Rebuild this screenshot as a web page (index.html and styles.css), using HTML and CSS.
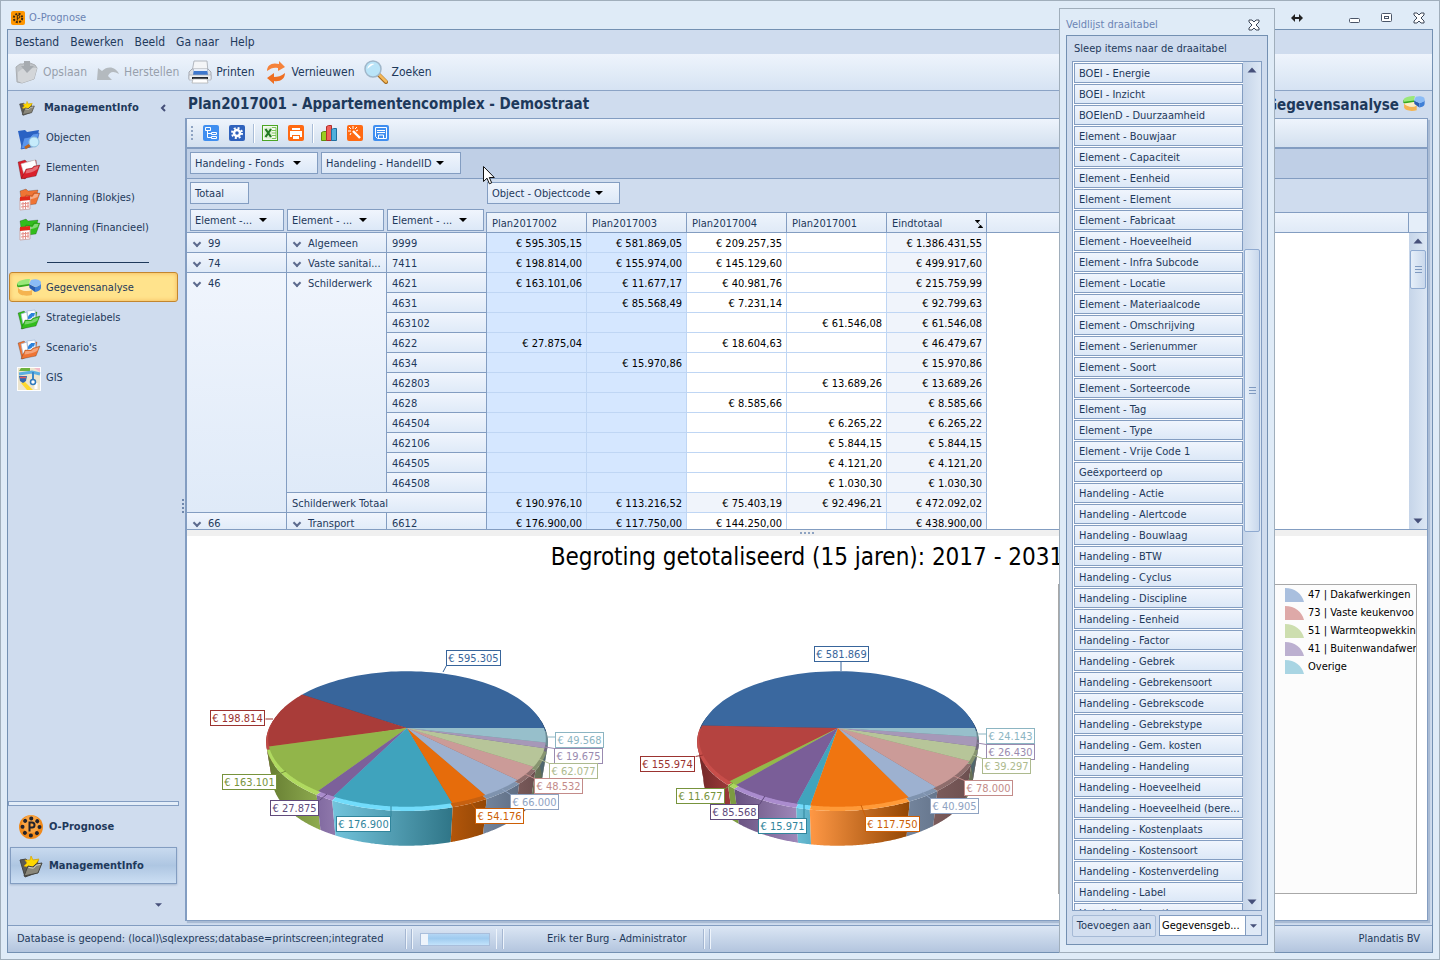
FILE: index.html
```
<!DOCTYPE html>
<html lang="nl">
<head>
    <meta charset="UTF-8">
    <meta name="viewport" content="width=device-width, initial-scale=1.0">
    <title>O-Prognose</title>
    <link rel="stylesheet" href="styles.css">
</head>
<body>
<!-- gedeelde iconen -->
<svg class="sprite" aria-hidden="true">
    <symbol id="i-folder" viewBox="0 0 24 24">
        <path d="M1 5l7-2 2 2 9-2 1 8-12 11-4-1z" fill="currentColor" stroke="#00000033"/>
        <path d="M4 7l14-4 2 8-13 6z" fill="#fff" stroke="#ccc" stroke-width=".6"/>
        <path d="M4 22l5-10 6-1 2-2 6-1-4 11z" fill="currentColor" stroke="#00000044" stroke-width=".8"/>
        <path d="M9.500 12.700l6-1 2-2 4-.7-1 3c-4 3-8 4-12 4.500z" fill="#fff" opacity=".35"/>
    </symbol>
    <symbol id="i-infofolder" viewBox="0 0 24 24">
        <path d="M1 6l6-1 2 2 10-1-2 13-11 4z" fill="#5c5a52" stroke="#444"/>
        <path d="M12 2l2 4 6-1-3 5-5 4-7-2 3-3-2-3 5 0z" fill="#ffd800" stroke="#d8a400" stroke-width=".7"/>
        <path d="M5 22l4-10 5 1 3-3 6-1-4 10z" fill="#8a877a" stroke="#44443f"/>
        <path d="M9.500 13.500l5 .7 3-3 4-.8" stroke="#d8d6c8" fill="none"/>
    </symbol>
    <symbol id="i-calfolder" viewBox="0 0 24 24">
        <path d="M3 4l6-2 2 2 10-1-3 13-13 3z" fill="currentColor" stroke="#00000033"/>
        <path d="M4 19L9 8l6 1 2-3 6 0-4 11z" fill="currentColor" stroke="#00000044" stroke-width=".7"/>
        <path d="M9.500 9l6 1 2-3 4 0-1 3c-4 2-8 2-12 3z" fill="#fff" opacity=".4"/>
        <path d="M3 11l10-1v12L3 23z" fill="#fff" stroke="#caa"/>
        <path d="M3 10l10-1v4L3 14z" fill="#e02a1a"/>
        <path d="M4 17l8-1M4 20l8-1M6 15v7M8.500 15v7M11 15v6" stroke="#e38d85"/>
    </symbol>
    <symbol id="i-docfolder" viewBox="0 0 24 24">
        <path d="M1 6l6-2 2 2 11-1-2 12-13 5z" fill="currentColor" stroke="#00000033"/>
        <path d="M4 7l6-2 1 10-5 2zM10 4l8-1 1 9-8 3z" fill="#fff" stroke="#9fb6d4" stroke-width=".7"/>
        <path d="M11 10c1-3 3-3 3-4l4 0-1 4-1-1c-1 2-2 3-5 3z" fill="#2b83dc"/>
        <path d="M4 22l4-9 6 0 2-2 7-2-4 10z" fill="currentColor" stroke="#00000044" stroke-width=".8"/>
        <path d="M8.500 14l6 0 2-2 5-1.500-1 3c-4 3-8 3-13 4z" fill="#fff" opacity=".35"/>
    </symbol>
    <symbol id="i-pie" viewBox="0 0 24 20">
        <path d="M0 5.500h12.500V10L1 9.500 0 8z" fill="#35a81d"/>
        <path d="M0 5.500C1 2.500 7 1 13 1l-1 5-11 1.500z" fill="#9ae87a"/>
        <path d="M1 9.500C4 13 10 14 15 12v5C9 18.500 2 17.500 1 14z" fill="#f5b450"/>
        <path d="M1 9.500L13 7.500l2 4.500C10 14 3 13 1 9.500z" fill="#fdeec5"/>
        <path d="M12 6l6 3v5l-5.500-4z" fill="#2a5db0"/>
        <path d="M18 9c4-1 6-2.500 6-4v4.500c0 2.500-3 4-6 4.500z" fill="#3f7fd6"/>
        <path d="M12 6l2-4c4-1.500 10-.5 10 3 0 2-3 3.500-6 4z" fill="#8bbcf6"/>
    </symbol>
    <symbol id="i-up" viewBox="0 0 10 6"><path d="M5 .5L9.500 5.500h-9z" fill="#46507a"/></symbol>
    <symbol id="i-down" viewBox="0 0 10 6"><path d="M5 5.500L9.500 .5h-9z" fill="#46507a"/></symbol>
    <symbol id="i-drop" viewBox="0 0 8 4"><path d="M0 0h8L4 4z"/></symbol>
    <symbol id="i-close" viewBox="0 0 12 12">
        <path d="M1 1h3l2 2 2-2h3v2L8 6l3 3v2H8L6 9l-2 2H1V9l3-3-3-3z" fill="#fff" stroke="#3c4657"/>
    </symbol>
    <symbol id="i-wedge" viewBox="0 0 19 14"><path d="M0 0c10 0 17 6 19 14H0z" fill="currentColor"/></symbol>
</svg>

<div class="app">
    <header class="titlebar">
        <svg class="logo" viewBox="0 0 14 14"><rect width="14" height="14" rx="2" fill="#ff9600"/><circle cx="7" cy="7" r="4.200" fill="none" stroke="#3d2a10" stroke-width="2" stroke-dasharray="2 1.300"/><path d="M6.300 9.500v-5h1.200a1.300 1.300 0 0 1 0 2.700H6.300" fill="none" stroke="#3d2a10"/></svg>
        <h1>O-Prognose</h1>
        <svg class="resize" viewBox="0 0 12 8"><path d="M0 4l4-4v3h4V0l4 4-4 4V5H4v3z" fill="#222"/></svg>
        <button class="win" aria-label="Minimaliseren"><svg width="12" height="12" viewBox="0 0 12 12"><rect x=".5" y="6.500" width="10" height="4" rx="1" fill="#fff" stroke="#4a5568"/></svg></button>
        <button class="win" aria-label="Maximaliseren"><svg width="12" height="12" viewBox="0 0 12 12"><rect x=".5" y="1.500" width="10" height="8" rx="1" fill="#fff" stroke="#4a5568"/><rect x="3.500" y="4.500" width="4" height="2" fill="#fff" stroke="#4a5568"/></svg></button>
        <button class="win" aria-label="Sluiten"><svg width="12" height="12"><use href="#i-close"/></svg></button>
    </header>

    <div class="frame">
        <nav class="menu">
            <a href="#">Bestand</a><a href="#">Bewerken</a><a href="#">Beeld</a><a href="#">Ga naar</a><a href="#">Help</a>
        </nav>
        <div class="tools">
            <button disabled>
                <svg viewBox="0 0 24 24"><path d="M1 7l4-3 3 0 2-1 5 0 5 2 2 3-3 11-12 4-5-1z" fill="#bfc3c7" stroke="#abafb3"/><path d="M3 12l4-3 12-1 3 0-3 11-12 4-4-2z" fill="#d3d6d9"/><path d="M9 1h6v5h4l-7 7-6-7h3z" fill="#a6abb0"/></svg>Opslaan
            </button>
            <button disabled>
                <svg viewBox="0 0 24 24"><path d="M1 20L2 8l4 3c6-6 14-4 17 3-5-3-9-3-11 2l4 4z" fill="#b4babf"/></svg>Herstellen
            </button>
            <button>
                <svg viewBox="0 0 24 24"><path d="M6 1h13l1 11H4z" fill="#f4f5f7" stroke="#b2b7bf"/><path d="M1 12l3-3h16l3 3v7H1z" fill="#dcdfe4" stroke="#a5a9b1"/><path d="M6 9h13l1 6H5z" fill="#3f78cd"/><path d="M6 9h13l0 2H6z" fill="#e9eef7"/><path d="M1 15h22v5H1z" fill="#eceef1" stroke="#a9adb5" stroke-width=".7"/><path d="M4 18h16" stroke="#23272e" stroke-width="2"/><path d="M5 19h14l1 4H4z" fill="#fff" stroke="#aaa" stroke-width=".7"/></svg>Printen
            </button>
            <button>
                <svg viewBox="0 0 24 24"><path d="M3 11c0-6 5-9 12-7V1l6 6-7 4V8c-4-1-7 0-11 3z" fill="#f5823a"/><path d="M21 13c0 6-5 9-11 8v3l-7-6 7-5v4c4 0 7-1 11-4z" fill="#ee6f22"/></svg>Vernieuwen
            </button>
            <button>
                <svg viewBox="0 0 24 24"><path d="M14 14l8 8" stroke="#a36a1d" stroke-width="4" stroke-linecap="round"/><path d="M14.500 14l7.500 7.500" stroke="#f5b95b" stroke-width="2.500" stroke-linecap="round"/><circle cx="9" cy="9" r="8" fill="#b9e4f8" stroke="#9fb6c9" stroke-width="1.500"/><path d="M3.500 9c0-4 4-6 7-5-3 1-5 3-7 5z" fill="#fff"/></svg>Zoeken
            </button>
        </div>

        <div class="body">
            <aside class="side">
                <h2><svg viewBox="0 0 24 24"><use href="#i-infofolder"/></svg>ManagementInfo
                    <button class="collapse" aria-label="Inklappen"><svg width="6" height="8" viewBox="0 0 6 8"><path d="M5 1L2 4l3 3" fill="none" stroke="#46507a" stroke-width="2"/></svg></button>
                </h2>
                <nav class="nav">
                    <a href="#"><svg class="blue" viewBox="0 0 24 24"><path d="M1 4l7-1 2 2 12-2-4 16-13 3z" fill="#2a62c4"/><path d="M4 22l3-11 6-1 3-3 6-1-3 13z" fill="#5b95ec" stroke="#2a5cb8" stroke-width=".7"/><path d="M13 18l-5 3" stroke="#c0651c" stroke-width="3"/><circle cx="17" cy="15" r="5" fill="#c6ebfb" stroke="#8fc0de"/></svg>Objecten</a>
                    <a href="#"><svg class="red" viewBox="0 0 24 24"><use href="#i-folder"/></svg>Elementen</a>
                    <a href="#"><svg class="orange" viewBox="0 0 24 24"><use href="#i-calfolder"/></svg>Planning (Blokjes)</a>
                    <a href="#"><svg class="green" viewBox="0 0 24 24"><use href="#i-calfolder"/></svg>Planning (Financieel)</a>
                    <hr>
                    <a href="#" class="on"><svg viewBox="0 0 24 20"><use href="#i-pie"/></svg>Gegevensanalyse</a>
                    <a href="#"><svg class="green" viewBox="0 0 24 24"><use href="#i-docfolder"/></svg>Strategielabels</a>
                    <a href="#"><svg class="orange" viewBox="0 0 24 24"><use href="#i-docfolder"/></svg>Scenario's</a>
                    <a href="#"><svg viewBox="0 0 24 24"><rect width="24" height="24" fill="#fff"/><rect x="1" y="1" width="22" height="22" fill="#ece5cf"/><path d="M4 1h9v3H2z" fill="#6cb33f"/><path d="M17 1h6v4z" fill="#f3bccb"/><path d="M2 7l13-2 8 2" stroke="#5aaee2" stroke-width="3" fill="none"/><path d="M7 14l9 9h-6l-6-7z" fill="#ffd92e"/><path d="M19 16v6" stroke="#fff" stroke-width="3"/><path d="M16 5v9" stroke="#3a87c8" stroke-width="2"/><circle cx="16" cy="15" r="2.500" fill="#fff" stroke="#2f79bd" stroke-width="1.500"/><path d="M2 9h8l-1 5-3 2-3-2z" fill="#3266b0"/><path d="M3 10.500h6" stroke="#e25b5b" stroke-width="1.500"/></svg>GIS</a>
                </nav>
                <div class="bar"></div>
                <nav class="groups">
                    <a href="#"><svg viewBox="0 0 24 24"><circle cx="12" cy="12" r="12" fill="#f08a1c"/><circle cx="12" cy="9" r="9" fill="#ffb65c" opacity=".6"/><circle cx="12" cy="12" r="8.500" fill="none" stroke="#23232b" stroke-width="4" stroke-linecap="round" stroke-dasharray=".1 6.570"/><path d="M10.500 16.500v-9h2.500a2.500 2.500 0 0 1 0 5h-2.500" fill="none" stroke="#23232b" stroke-width="2"/></svg>O-Prognose</a>
                    <a href="#" class="on"><svg viewBox="0 0 24 24"><use href="#i-infofolder"/></svg>ManagementInfo</a>
                </nav>
                <button class="more" aria-label="Meer"><svg width="7" height="4"><use href="#i-drop"/></svg></button>
            </aside>
            <div class="vsplit"><i></i></div>

            <main class="main">
                <div class="heading">
                    <h2>Plan2017001 - Appartementencomplex - Demostraat</h2>
                    <h2 class="page">Gegevensanalyse<svg viewBox="0 0 24 20"><use href="#i-pie"/></svg></h2>
                </div>
                <div class="panel">
                    <div class="icons">
                        <i class="grip"></i>
                        <button aria-label="Veldlijst"><svg viewBox="0 0 16 16"><rect width="16" height="16" rx="2" fill="#3f8ef0"/><path d="M2.500 2.500h5v3h-5zM8.500 7.500h5v2h-5zM8.500 11.500h5v2h-5zM4.500 6v6.500h4M4.500 8.500h4" fill="none" stroke="#fff"/></svg></button>
                        <button aria-label="Instellingen"><svg viewBox="0 0 16 16"><rect width="16" height="16" rx="2" fill="#2f62bd"/><circle cx="8" cy="8" r="3" fill="none" stroke="#fff" stroke-width="2.500"/><circle cx="8" cy="8" r="5" fill="none" stroke="#fff" stroke-width="2" stroke-dasharray="2 1.930"/></svg></button>
                        <i class="sep"></i>
                        <button aria-label="Exporteren naar Excel"><svg viewBox="0 0 16 16"><rect x=".5" y=".5" width="15" height="15" fill="#f4faf0" stroke="#4ba524"/><path d="M10 2.500h4v11h-4M10 5.500h4M10 8h4M10 10.500h4" stroke="#7cc35b" fill="none"/><path d="M2 3l8-1v12l-8-1z" fill="#d9efcf"/><path d="M3.500 4l5.500 8M9 4l-5.500 8" stroke="#227a22" stroke-width="2.200"/></svg></button>
                        <button aria-label="Afdrukken"><svg viewBox="0 0 16 16"><rect width="16" height="16" rx="2" fill="#ff6a13"/><path d="M4 3h8v2H4zM2 6h12v6h-2v-2H4v2H2zM5 11h6v3H5z" fill="#fff"/></svg></button>
                        <i class="sep"></i>
                        <button aria-label="Grafiek"><svg viewBox="0 0 16 16"><path d="M.5 7.500l2-1h3v9h-5z" fill="#9bcc20" stroke="#5d8f0c"/><path d="M5.500 1.500l2-1h3v15h-5z" fill="#f0605a" stroke="#b32d2a"/><path d="M10.500 4.500l2-1h3v12h-5z" fill="#4fb0dc" stroke="#1f6fa0"/></svg></button>
                        <button aria-label="Wizard"><svg viewBox="0 0 16 16"><rect width="16" height="16" rx="2" fill="#ff6a13"/><path d="M6 6l7 7" stroke="#fff" stroke-width="2.400"/><path d="M6 1v3M2 2l2 2M1 6h3M10 2L8 4M3 10l1-2M11 5L9 6" stroke="#fff"/></svg></button>
                        <button aria-label="Opslaan"><svg viewBox="0 0 16 16"><rect width="16" height="16" rx="2" fill="#3f8ef0"/><path d="M2.500 2.500h11v11h-9l-2-2z" fill="none" stroke="#fff"/><path d="M4 5.500h8M4 7.500h8M5.500 13v-3h5v3" fill="none" stroke="#fff"/></svg></button>
                    </div>
                    <div class="filters">
                        <button class="field">Handeling - Fonds<svg><use href="#i-drop"/></svg></button>
                        <button class="field">Handeling - HandelID<svg><use href="#i-drop"/></svg></button>
                    </div>
                    <div class="pivot">
                        <div class="scroll">
                        <table>
                            <colgroup><col class="c"><col class="c"><col class="c"><col class="c"><col class="c"><col class="c"><col class="c"><col class="c"><col></colgroup>
                            <thead>
                            <tr class="areas">
                                <td colspan="3"><button class="field short">Totaal</button></td>
                                <td colspan="6"><button class="field object">Object - Objectcode<svg><use href="#i-drop"/></svg></button></td>
                            </tr>
                            <tr class="cols">
                                <th><button class="field wide">Element -...<svg><use href="#i-drop"/></svg></button></th>
                                <th><button class="field wide">Element - ...<svg><use href="#i-drop"/></svg></button></th>
                                <th><button class="field wide">Element - ...<svg><use href="#i-drop"/></svg></button></th>
                                <th><div>Plan2017002</div></th>
                                <th><div>Plan2017003</div></th>
                                <th><div>Plan2017004</div></th>
                                <th><div>Plan2017001</div></th>
                                <th><div>Eindtotaal<svg width="8" height="8" viewBox="0 0 8 8"><path d="M0 0h5L2.500 3zM3 8h5L5.500 5zM2 2l4 4" stroke="#000" stroke-width=".5"/></svg></div></th>
                                <th><div></div></th>
                            </tr>
                            </thead>
                            <tbody>
                            <tr><th class="g">99</th><th class="g">Algemeen</th><th>9999</th><td>€ 595.305,15</td><td>€ 581.869,05</td><td>€ 209.257,35</td><td></td><td>€ 1.386.431,55</td></tr>
                            <tr><th class="g">74</th><th class="g">Vaste sanitai...</th><th>7411</th><td>€ 198.814,00</td><td>€ 155.974,00</td><td>€ 145.129,60</td><td></td><td>€ 499.917,60</td></tr>
                            <tr><th class="g" rowspan="12">46</th><th class="g" rowspan="11">Schilderwerk</th><th>4621</th><td>€ 163.101,06</td><td>€ 11.677,17</td><td>€ 40.981,76</td><td></td><td>€ 215.759,99</td></tr>
                            <tr><th>4631</th><td></td><td>€ 85.568,49</td><td>€ 7.231,14</td><td></td><td>€ 92.799,63</td></tr>
                            <tr><th>463102</th><td></td><td></td><td></td><td>€ 61.546,08</td><td>€ 61.546,08</td></tr>
                            <tr><th>4622</th><td>€ 27.875,04</td><td></td><td>€ 18.604,63</td><td></td><td>€ 46.479,67</td></tr>
                            <tr><th>4634</th><td></td><td>€ 15.970,86</td><td></td><td></td><td>€ 15.970,86</td></tr>
                            <tr><th>462803</th><td></td><td></td><td></td><td>€ 13.689,26</td><td>€ 13.689,26</td></tr>
                            <tr><th>4628</th><td></td><td></td><td>€ 8.585,66</td><td></td><td>€ 8.585,66</td></tr>
                            <tr><th>464504</th><td></td><td></td><td></td><td>€ 6.265,22</td><td>€ 6.265,22</td></tr>
                            <tr><th>462106</th><td></td><td></td><td></td><td>€ 5.844,15</td><td>€ 5.844,15</td></tr>
                            <tr><th>464505</th><td></td><td></td><td></td><td>€ 4.121,20</td><td>€ 4.121,20</td></tr>
                            <tr><th>464508</th><td></td><td></td><td></td><td>€ 1.030,30</td><td>€ 1.030,30</td></tr>
                            <tr class="total"><th colspan="2">Schilderwerk Totaal</th><td>€ 190.976,10</td><td>€ 113.216,52</td><td>€ 75.403,19</td><td>€ 92.496,21</td><td>€ 472.092,02</td></tr>
                            <tr><th class="g">66</th><th class="g">Transport</th><th>6612</th><td>€ 176.900,00</td><td>€ 117.750,00</td><td>€ 144.250,00</td><td></td><td>€ 438.900,00</td></tr>
                            </tbody>
                        </table>
                        </div>
                        <div class="edge">
                            <i class="corner"></i>
                            <div class="rail">
                                <svg><use href="#i-up"/></svg><i class="thumb"></i><svg class="end"><use href="#i-down"/></svg>
                            </div>
                        </div>
                    </div>
                    <div class="hsplit"><i></i></div>
                    <section class="chart">
                        <h3>Begroting getotaliseerd (15 jaren): 2017 - 2031</h3>
                        <div class="plot">
                            <svg class="pie" id="pie1" viewBox="0 0 431 230"></svg>
                            <svg class="pie" id="pie2" viewBox="0 0 431 230"></svg>
                            <ul class="legend">
                                <li><svg class="l1"><use href="#i-wedge"/></svg>47 | Dakafwerkingen</li>
                                <li><svg class="l2"><use href="#i-wedge"/></svg>73 | Vaste keukenvoo</li>
                                <li><svg class="l3"><use href="#i-wedge"/></svg>51 | Warmteopwekkin</li>
                                <li><svg class="l4"><use href="#i-wedge"/></svg>41 | Buitenwandafwer</li>
                                <li><svg class="l5"><use href="#i-wedge"/></svg>Overige</li>
                            </ul>
                        </div>
                    </section>
                </div>
            </main>
        </div>

        <footer class="status">
            <span class="db">Database is geopend: (local)\sqlexpress;database=printscreen;integrated</span>
            <i class="div"></i><i class="progress"></i><i class="div"></i>
            <span class="user">Erik ter Burg - Administrator</span><i class="div"></i>
            <span class="vendor">Plandatis BV</span>
        </footer>
    </div>

    <svg class="pointer" viewBox="0 0 12 19"><path d="M.5 .5v15l3.500-3.300 2.400 5.600 2.300-1-2.400-5.300h5z" fill="#fff" stroke="#111"/></svg>

    <section class="fieldlist">
        <header>
            <h2>Veldlijst draaitabel</h2>
            <button class="win" aria-label="Sluiten"><svg width="12" height="12"><use href="#i-close"/></svg></button>
        </header>
        <div class="inner">
            <p>Sleep items naar de draaitabel</p>
            <div class="box">
                <ul>
                    <li>BOEI - Energie</li>
                    <li>BOEI - Inzicht</li>
                    <li>BOEIenD - Duurzaamheid</li>
                    <li>Element - Bouwjaar</li>
                    <li>Element - Capaciteit</li>
                    <li>Element - Eenheid</li>
                    <li>Element - Element</li>
                    <li>Element - Fabricaat</li>
                    <li>Element - Hoeveelheid</li>
                    <li>Element - Infra Subcode</li>
                    <li>Element - Locatie</li>
                    <li>Element - Materiaalcode</li>
                    <li>Element - Omschrijving</li>
                    <li>Element - Serienummer</li>
                    <li>Element - Soort</li>
                    <li>Element - Sorteercode</li>
                    <li>Element - Tag</li>
                    <li>Element - Type</li>
                    <li>Element - Vrije Code 1</li>
                    <li>Geëxporteerd op</li>
                    <li>Handeling - Actie</li>
                    <li>Handeling - Alertcode</li>
                    <li>Handeling - Bouwlaag</li>
                    <li>Handeling - BTW</li>
                    <li>Handeling - Cyclus</li>
                    <li>Handeling - Discipline</li>
                    <li>Handeling - Eenheid</li>
                    <li>Handeling - Factor</li>
                    <li>Handeling - Gebrek</li>
                    <li>Handeling - Gebrekensoort</li>
                    <li>Handeling - Gebrekscode</li>
                    <li>Handeling - Gebrekstype</li>
                    <li>Handeling - Gem. kosten</li>
                    <li>Handeling - Handeling</li>
                    <li>Handeling - Hoeveelheid</li>
                    <li>Handeling - Hoeveelheid (bere...</li>
                    <li>Handeling - Kostenplaats</li>
                    <li>Handeling - Kostensoort</li>
                    <li>Handeling - Kostenverdeling</li>
                    <li>Handeling - Label</li>
                    <li>Handeling - Locatie</li>
                </ul>
                <div class="rail">
                    <svg><use href="#i-up"/></svg><i class="thumb long"></i><svg class="end"><use href="#i-down"/></svg>
                </div>
            </div>
            <div class="add">
                <button>Toevoegen aan</button>
                <div class="combo">
                    <select aria-label="Gebied"><option>Gegevensgeb...</option></select>
                    <span><svg><use href="#i-drop"/></svg></span>
                </div>
            </div>
        </div>
    </section>
</div>
<script src="pies.js"></script>
</body>
</html>
```
FILE: styles.css
```
*{ margin: 0; padding: 0; box-sizing: border-box; }
ul{ list-style: none; }
a{ text-decoration: none; color: inherit; }
button{ background: none; border: none; font: inherit; color: inherit; }
svg{ display: block; flex: none; }
html,body{ height: 100%; }
body{
    font-family: "DejaVu Sans Condensed", "DejaVu Sans", sans-serif;
    font-size: 11px;
    line-height: 16px;
    color: #1e395b;
    overflow: hidden;
}
.sprite{ position: absolute; width: 0; height: 0; }
.app{
    position: relative;
    display: flex;
    flex-direction: column;
    height: 100vh;
    padding: 0 6px 6px;
    background: #dfebf7;
    border: 1px solid #a0aebb;
}

/* titelbalk */
.titlebar{
    display: flex;
    align-items: center;
    height: 28px;
    padding: 6px 8px 0 4px;
}
.titlebar h1{ font-size: 11px; font-weight: normal; color: #6b84b4; margin-left: 4px; }
.logo{ width: 14px; height: 14px; }
.resize{ width: 12px; height: 8px; margin-left: auto; margin-right: 46px; }
.win{ display: flex; }
.titlebar .win + .win{ margin-left: 20px; }

.frame{
    flex: 1;
    display: flex;
    flex-direction: column;
    min-height: 0;
    border: 1px solid #7390b2;
    background: #cfdcee;
}
.menu{
    display: flex;
    gap: 11px;
    height: 24px;
    padding: 4px 7px 0;
    font-size: 12px;
}
.tools{
    display: flex;
    align-items: center;
    gap: 9px;
    height: 37px;
    padding: 0 7px;
    font-size: 12px;
    background: linear-gradient(#eef4fc, #d6e3f3);
    border-bottom: 1px solid #8ba3c5;
}
.tools button{ display: flex; align-items: center; gap: 4px; }
.tools button:disabled{ color: #97a0ac; }
.tools svg{ width: 24px; height: 24px; }

.body{ flex: 1; display: flex; min-height: 0; padding: 0 4px 4px 0; }

/* navigatie links */
.side{ width: 172px; display: flex; flex-direction: column; }
.side h2{
    display: flex;
    align-items: center;
    height: 31px;
    padding: 2px 0 0 11px;
    font-size: 11px;
}
.side h2 svg{ width: 16px; height: 16px; margin-right: 9px; }
.side .collapse{ margin-left: auto; margin-right: 14px; }
.side .collapse svg{ width: 6px; height: 8px; margin: 0; }
.nav a{
    display: flex;
    align-items: center;
    gap: 5px;
    height: 30px;
    margin: 0 2px 0 1px;
    padding: 2px 0 0 7px;
    border: 1px solid transparent;
    border-radius: 3px;
}
.nav svg{ width: 24px; height: 24px; margin-top: 2px; }
.nav .on svg{ height: 20px; margin-top: 0; }
.nav hr{ border: none; border-top: 1px solid #1e395b; width: 102px; margin: 20px 0 9px 39px; }
.nav .on{
    background: #ffe38c;
    border-color: #c2862f;
    box-shadow: inset 0 0 4px #f2b255;
}
.red{ color: #d9202b; }
.orange{ color: #ef7434; }
.green{ color: #32bd1c; }
.bar{ margin-top: auto; margin-right: 1px; height: 5px; border: 1px solid #839dc1; background: #e3edf8; }
.groups a{
    display: flex;
    align-items: center;
    gap: 6px;
    height: 37px;
    margin: 2px 3px 2px 2px;
    padding-left: 8px;
    font-weight: bold;
    border: 1px solid transparent;
}
.groups svg{ width: 24px; height: 24px; }
.groups .on{
    border-color: #839dc1;
    background: linear-gradient(#c8daef, #aec6e2 50%, #cbdef3);
    box-shadow: 0 1px 2px #a5b7cf;
}
.more{ align-self: flex-end; padding: 17px 18px 14px 0; fill: #46507a; }
.vsplit{ display: flex; align-items: center; justify-content: center; width: 5px; }
.vsplit i{ width: 2px; height: 14px; background: repeating-linear-gradient(#6f88ad 0 2px, transparent 2px 4px); }

/* werkgebied */
.main{ flex: 1; min-width: 0; display: flex; flex-direction: column; }
.heading{ display: flex; height: 27px; padding: 3px 2px 0 3px; }
.heading h2{ font-size: 15px; line-height: 20px; white-space: nowrap; }
.heading .page{ display: flex; gap: 3px; margin-left: auto; padding-top: 1px; }
.page svg{ width: 24px; height: 18px; }
.panel{
    flex: 1;
    display: flex;
    flex-direction: column;
    min-height: 0;
    border: 1px solid #839dc1;
    border-left-width: 2px;
    box-shadow: 2px 2px 1px #a9bbd4;
    background: #cfdcee;
}
.icons{
    display: flex;
    align-items: center;
    gap: 10px;
    height: 30px;
    padding-left: 4px;
    background: linear-gradient(#eef4fc, #d3e0ef);
    border-bottom: 2px solid #839dc1;
}
.icons svg{ width: 16px; height: 16px; }
.grip{ width: 2px; height: 14px; background: repeating-linear-gradient(#8ea3c2 0 2px, transparent 2px 4px); }
.sep{ width: 1px; height: 19px; margin: 0 -2px; background: #a9bdd8; box-shadow: 1px 0 #fff; }
.filters{
    display: flex;
    gap: 3px;
    height: 30px;
    padding: 3px;
    background: #bfcfe6;
    border-bottom: 1px solid #839dc1;
}
.field{
    display: flex;
    align-items: center;
    height: 22px;
    padding: 2px 16px 0 4px;
    border: 1px solid #839dc1;
    background: linear-gradient(#f0f5fd, #dce8f7);
    white-space: nowrap;
}
.field svg{ width: 8px; height: 4px; margin: 0 0 2px auto; fill: #000; }
.filters .field:first-child{ width: 128px; }
.filters .field:last-child{ width: 140px; }
.field.short{ width: 59px; }
.field.object{ width: 133px; }
.field.wide{ width: 97px; }
.cols th:first-child .field{ width: 94px; margin-left: 3px; }

.pivot{ display: flex; height: 351px; border-bottom: 1px solid #839dc1; }
.scroll{ flex: 1; min-width: 0; overflow: hidden; background: #fff; }
table{ width: 100%; table-layout: fixed; border-collapse: separate; border-spacing: 0; }
.c{ width: 100px; }
thead{ background: #cfdcee; }
.areas td{ height: 30px; padding: 3px; vertical-align: top; }
.areas td + td{ padding-left: 0; }
.cols th{ height: 24px; vertical-align: top; border-bottom: 1px solid #839dc1; padding: 0; font-weight: normal; text-align: left; }
.cols div{
    display: flex;
    align-items: center;
    justify-content: space-between;
    height: 20px;
    margin: 3px 0 0;
    padding: 2px 3px 0 5px;
    border-top: 1px solid #839dc1;
    border-right: 1px solid #839dc1;
    background: linear-gradient(#eef4fc, #e0eaf7);
}
.cols th:nth-child(4) div{ margin-left: -1px; border-left: 1px solid #839dc1; }
tbody th, tbody td{ height: 20px; padding: 3px 5px 0; vertical-align: top; white-space: nowrap; overflow: hidden; }
tbody th{
    text-align: left;
    font-weight: normal;
    border-right: 1px solid #839dc1;
    border-bottom: 1px solid #839dc1;
    background: linear-gradient(#f0f5fd, #dfeaf8);
}
tbody th.g{ padding-left: 21px; position: relative; }
/* uitklappijl van een groep */
tbody th.g::before{
    content: "";
    position: absolute;
    left: 7px;
    top: 7px;
    width: 4px;
    height: 4px;
    border: solid #5d6b8e;
    border-width: 0 2px 2px 0;
    transform: rotate(45deg);
}
tbody td{
    text-align: right;
    color: #000;
    padding-right: 4px;
    border-right: 1px solid #bfd6f4;
    border-bottom: 1px solid #bfd6f4;
}
tbody td:nth-last-child(4), tbody td:nth-last-child(5){ background: #d5e7ff; }
tbody td:last-child, .total td:nth-last-child(-n+3){ background: #f0f4fb; }
tbody td:last-child{ border-right-color: #9cb6d8; }

.edge{ display: flex; flex-direction: column; width: 18px; }
.corner{ height: 21px; margin-top: 33px; border: solid #839dc1; border-width: 1px 0; background: #e5eef9; }
.rail{
    display: flex;
    flex-direction: column;
    align-items: center;
    width: 18px;
    padding: 5px 1px;
    background: linear-gradient(90deg, #c6d5e9, #dce7f4);
}
.edge .rail{ flex: 1; }
.rail svg{ width: 10px; height: 6px; }
.rail .end{ margin-top: auto; }
.thumb{
    width: 16px;
    height: 39px;
    margin-top: 6px;
    border: 1px solid #8faad0;
    border-radius: 2px;
    background:
        repeating-linear-gradient(#7f9ac0 0 1px, transparent 1px 3px) center / 7px 7px no-repeat,
        linear-gradient(90deg, #e6eff9, #c9d8ec);
}
.thumb.long{ height: 283px; margin-top: 176px; }
.hsplit{ display: flex; justify-content: center; height: 6px; padding-top: 2px; background: #f0f0f0; }
.hsplit i{ width: 14px; height: 2px; background: repeating-linear-gradient(90deg, #8ea3c2 0 2px, transparent 2px 4px); }

/* grafiek */
.chart{ flex: 1; min-height: 0; display: flex; flex-direction: column; background: #fff; color: #000; }
.chart h3{ font-size: 24px; line-height: 30px; padding-top: 6px; font-weight: normal; text-align: center; white-space: nowrap; }
.plot{ flex: 1; display: flex; align-items: flex-start; padding: 12px 10px 26px 5px; overflow: hidden; }
.pie{ width: 431px; height: 230px; margin-top: 52px; }
.pie text{ font-size: 11px; text-anchor: middle; }
.pie rect{ fill: #fff; }
.legend{
    width: 359px;
    height: 310px;
    margin-left: auto;
    padding: 1px 0 0 226px;
    border: 1px solid #a8a8a8;
    background: #fcfcfc;
    overflow: hidden;
}
.legend li{ display: flex; align-items: center; gap: 4px; height: 18px; white-space: nowrap; }
.legend svg{ width: 19px; height: 14px; }
.l1{ color: #a9bfde; }
.l2{ color: #dea9a8; }
.l3{ color: #cddeaf; }
.l4{ color: #bcb0d0; }
.l5{ color: #a9d5e3; }

/* statusbalk */
.status{
    display: flex;
    align-items: center;
    height: 27px;
    padding: 0 12px 0 9px;
    white-space: nowrap;
    background: linear-gradient(#dbe6f4, #b3c5de);
    border-top: 1px solid #839dc1;
}
.div{ width: 7px; height: 20px; margin-left: 8px; border: solid #a5b7d2; border-width: 0 1px; box-shadow: 1px 0 #eef4fb, inset 1px 0 #eef4fb; }
.progress{
    width: 70px;
    height: 13px;
    margin-left: 8px;
    border: 1px solid #a9bedb;
    background: linear-gradient(90deg, #eef4fb 7px, transparent 7px), linear-gradient(#b3d6f4, #9fcbef 40%, #c2e2fb);
}
.progress + .div{ margin-left: 6px; border-left: none; }
.db{ width: 380px; }
.user{ width: 148px; margin-left: 44px; }
.vendor{ margin-left: auto; }

.pointer{ position: absolute; left: 482px; top: 165px; width: 12px; height: 19px; }

/* zwevende veldlijst */
.fieldlist{
    position: absolute;
    top: 7px;
    right: 164px;
    bottom: 6px;
    width: 216px;
    display: flex;
    flex-direction: column;
    padding: 0 6px 7px;
    border: 1px solid #a0aebb;
    background: #dfebf7;
}
.fieldlist header{ display: flex; align-items: center; justify-content: space-between; height: 26px; padding: 6px 8px 0 0; }
.fieldlist h2{ font-size: 11px; font-weight: normal; color: #6b84b4; }
.inner{
    flex: 1;
    display: flex;
    flex-direction: column;
    min-height: 0;
    padding: 5px;
    border: 1px solid #7390b2;
    background: #cfdcee;
}
.inner p{ height: 20px; padding-left: 2px; }
.box{
    flex: 1;
    display: flex;
    min-height: 0;
    overflow: hidden;
    border: 1px solid #839dc1;
    background: #fff;
}
.box ul{ flex: 1; min-width: 0; padding: 1px 0 0 1px; }
.box li{
    height: 20px;
    margin-bottom: 1px;
    padding: 2px 4px 0;
    border: 1px solid #839dc1;
    background: linear-gradient(#f0f5fd, #dce8f7);
    white-space: nowrap;
    overflow: hidden;
}
.add{ display: flex; gap: 3px; height: 28px; padding-top: 4px; }
.add button{ width: 84px; height: 22px; border: 1px solid #a6bad6; border-radius: 2px; background: #d3dff0; white-space: nowrap; }
.combo{ position: relative; flex: 1; height: 21px; }
.combo select{
    appearance: none;
    width: 100%;
    height: 100%;
    padding-left: 2px;
    font: inherit;
    color: #000;
    border: 1px solid #839dc1;
    border-radius: 0;
    background: #fff;
}
.combo span{
    position: absolute;
    top: 1px;
    right: 1px;
    bottom: 1px;
    width: 16px;
    display: flex;
    align-items: center;
    justify-content: center;
    border-left: 1px solid #839dc1;
    background: #dfe9f6;
    pointer-events: none;
}
.combo svg{ width: 7px; height: 4px; fill: #46507a; }
```
FILE: pies.js
```
var NS = "http://www.w3.org/2000/svg";
var K = 0.162; // perspectief

// [waarde, bovenkant, rand, zijkant links, zijkant rechts, labelkleur, label x, label y, lijn x, lijn y]
var pies = {
    pie1: [
        [595305, "#38659b", "#2c5079", "#2c5079", "#203c5c", "#38659b", 39, -78, 36, -56],
        [198814, "#a93c39", "#c04a46", "#7a2a2a", "#7a2a2a", "#9b3330", -197, -18, -134, -9],
        [163101, "#92b54a", "#b0da60", "#657c31", "#8fac50", "#77933c", -185, 46, -121, 43],
        [27875, "#7c609a", "#a98bcc", "#8069a0", "#9079ac", "#604a7b", -137, 72, -80, 66],
        [176900, "#3fa3bd", "#72dcfb", "#73c4dc", "#2f7587", "#31859c", -71, 88, -16, 78],
        [54176, "#e66c0b", "#c7600f", "#b3560a", "#934706", "#cd5f05", 68, 80, 64, 75],
        [66000, "#9db1d0", "#7f93ae", "#74859d", "#5f6e84", "#8fa3c2", 103, 66, 95, 61],
        [48532, "#cb9b98", "#8e6d6c", "#7b5b5b", "#6d5050", "#c38b89", 127, 50, 118, 46],
        [62077, "#b7c599", "#87946f", "#6d775b", "#626b52", "#adba8e", 142, 35, 132, 31],
        [19675, "#a698b8", "#736b80", "#5f5a6b", "#5f5a6b", "#9a8bb0", 147, 20, 138, 19],
        [49568, "#97bfcb", "#6b8b94", "#4f676e", "#4f676e", "#8cb5c2", 148, 4, 141, 9]
    ],
    pie2: [
        [581869, "#3a689f", "#2c5079", "#2c5079", "#203c5c", "#38659b", -24, -82, 3, -57],
        [155974, "#b54340", "#c84e4a", "#702727", "#a03b3b", "#9b3330", -198, 28, -135, 27],
        [11677, "#93b94a", "#aad95d", "#7c9b41", "#7c9b41", "#77933c", -162, 60, -105, 55],
        [85568, "#7a5e98", "#aa8cce", "#67517f", "#9f88ba", "#604a7b", -128, 76, -73, 68],
        [15971, "#41a4bd", "#72dcfb", "#6abdd4", "#5aaec6", "#31859c", -80, 90, -34, 76],
        [117750, "#f07510", "#ff9a38", "#ff9845", "#924604", "#cd5f05", 27, 88, 23, 77],
        [40905, "#9db1d0", "#7f93ae", "#74859d", "#66768d", "#8fa3c2", 92, 70, 84, 64],
        [78000, "#cb9b98", "#8e6d6c", "#7b5b5b", "#6d5050", "#c38b89", 126, 52, 116, 48],
        [39297, "#b7c599", "#87946f", "#6d775b", "#626b52", "#adba8e", 144, 30, 135, 27],
        [26430, "#a698b8", "#736b80", "#5f5a6b", "#5f5a6b", "#9a8bb0", 148, 16, 139, 15],
        [24143, "#97bfcb", "#6b8b94", "#4f676e", "#4f676e", "#8cb5c2", 148, 0, 140, 6]
    ]
};

function add(parent, name, attrs){
    var el = document.createElementNS(NS, name);
    for(var key in attrs) el.setAttribute(key, attrs[key]);
    parent.appendChild(el);
    return el;
}

// punt op een gekantelde cirkel: straal r, diepte d, hoogte y
function point(t, r, d, y){
    var w = 1 + K * Math.sin(t);
    return (r * Math.cos(t) / w).toFixed(1) + "," + (y - d * Math.sin(t) / w).toFixed(1);
}

function arc(from, to, r, d, y){
    var list = [];
    for(var i = 0; i <= 60; i++) list.push(point(from + (to - from) * i / 60, r, d, y));
    return list;
}

// uiterste hoeken links en rechts, daar draait de zijkant naar achteren
var LEFT = Math.PI + Math.asin(K);
var RIGHT = Math.PI * 2 - Math.asin(K);

function draw(id, rows){
    var svg = document.getElementById(id);
    var defs = add(svg, "defs", {});
    var g = add(svg, "g", {transform: "translate(215 92)"});
    var sides = add(g, "g", {}), rims = add(g, "g", {}), tops = add(g, "g", {}), labels = add(g, "g", {});
    var sum = rows.reduce(function (s, r) { return s + r[0]; }, 0);
    var angle = 0;
    rows.forEach(function (r, i) {
        var end = angle + r[0] / sum * Math.PI * 2;
        var grad = add(defs, "linearGradient", {id: id + "g" + i});
        add(grad, "stop", {offset: 0, "stop-color": r[3]});
        add(grad, "stop", {offset: 1, "stop-color": r[4]});
        var cuts = [angle, LEFT, RIGHT, end].filter(function (a) { return a >= angle && a <= end; });
        for(var c = 1; c < cuts.length; c++){
            var side = arc(cuts[c - 1], cuts[c], 139, 67, 3).concat(arc(cuts[c], cuts[c - 1], 133, 66, 39));
            add(sides, "polygon", {points: side.join(" "), fill: "url(#" + id + "g" + i + ")"});
        }
        add(rims, "polygon", {points: ["0,0"].concat(arc(angle, end, 139, 67, 3)).join(" "), fill: r[2]});
        add(tops, "polygon", {points: ["0,0"].concat(arc(angle, end, 137, 66, 0)).join(" "), fill: r[1]});
        angle = end;
    });
    rows.slice().reverse().forEach(function (r) {
        var text = "€ " + Math.floor(r[0] / 1000) + "." + String(r[0]).slice(-3);
        var w = r[0] > 99999 ? 55 : 49;
        var x = r[6] + 0.5, y = r[7] + 0.5;
        add(labels, "line", {x1: r[8], y1: r[9], x2: Math.max(x, Math.min(r[8], x + w)), y2: Math.max(y, Math.min(r[9], y + 15)), stroke: r[5]});
        add(labels, "rect", {x: x, y: y, width: w - 1, height: 15, stroke: r[5]});
        add(labels, "text", {x: x + w / 2 - 0.5, y: y + 11.5, fill: r[5]}).textContent = text;
    });
}

for(var id in pies) draw(id, pies[id]);
```
